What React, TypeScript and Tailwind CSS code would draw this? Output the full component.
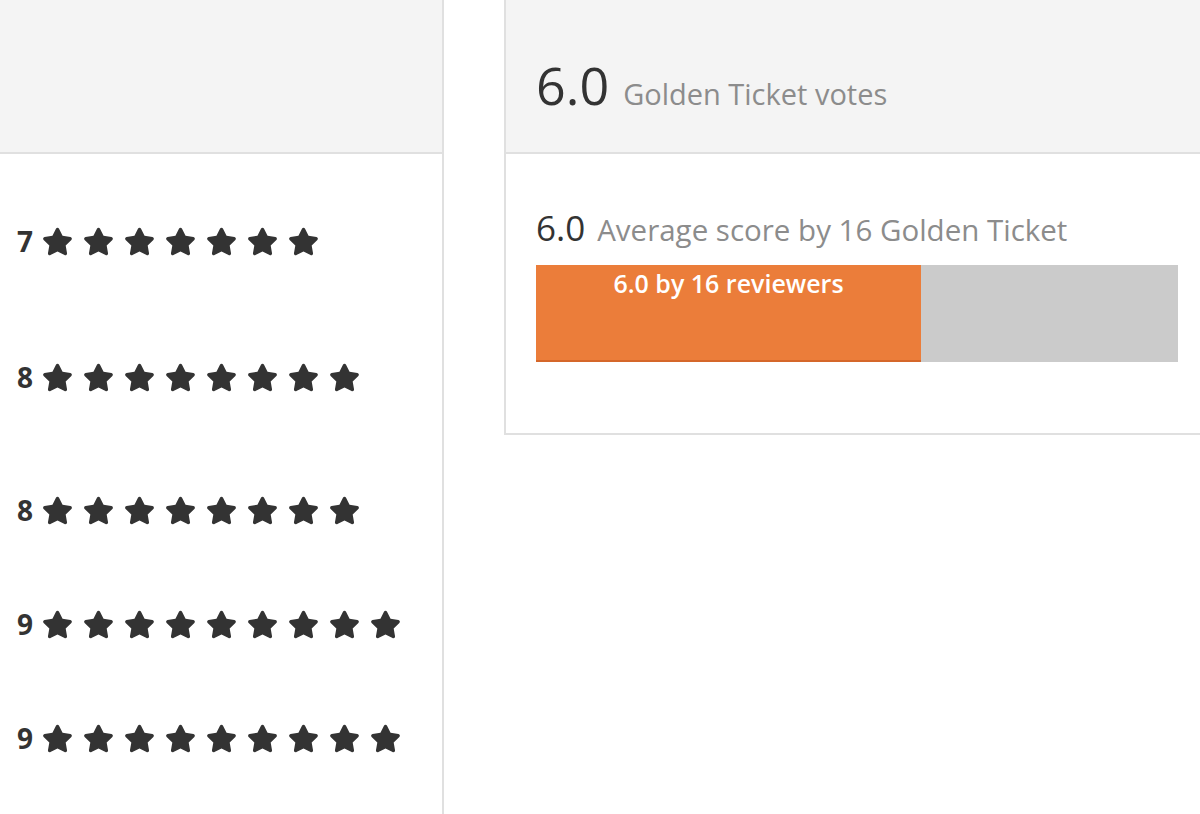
import { FaStar } from "react-icons/fa";

const rows = [
  { score: 7, gap: "mt-[72px]" },
  { score: 8, gap: "mt-[106px]" },
  { score: 8, gap: "mt-[103px]" },
  { score: 9, gap: "mt-[84px]" },
  { score: 9, gap: "mt-[84px]" },
];

const font = { fontFamily: '"Open Sans", "Noto Sans", sans-serif' };

export default function App() {
  return (
    <div className="flex h-[814px] w-[1200px] overflow-hidden bg-white" style={font}>
      {/* Reviewer list */}
      <div className="w-[444px] shrink-0 border-r-2 border-[#e0e0e0]">
        <div className="h-[154px] border-b-2 border-[#e0e0e0] bg-[#f4f4f4]" />
        <div className="flex flex-col">
          {rows.map((row, i) => (
            <div key={i} className={`flex h-[30px] items-center pl-[17px] ${row.gap}`}>
              <span className="mr-[9px] text-[28px] font-bold leading-none text-[#333]">
                {row.score}
              </span>
              <div className="flex gap-[10px] text-[#333]">
                {Array.from({ length: row.score }).map((_, j) => (
                  <FaStar key={j} className="h-[31px] w-[31px]" />
                ))}
              </div>
            </div>
          ))}
        </div>
      </div>

      {/* Golden Ticket card */}
      <div className="ml-[60px] h-[435px] w-[740px] shrink-0 border-b-2 border-l-2 border-[#e0e0e0]">
        <div className="flex h-[154px] items-end border-b-2 border-[#e0e0e0] bg-[#f4f4f4] pb-[41px] pl-[30px]">
          <span className="text-[52px] leading-none text-[#333]">6.0</span>
          <span className="ml-[14px] mb-[3px] text-[29px] leading-none text-[#8c8c8c]">
            Golden Ticket votes
          </span>
        </div>
        <div className="pl-[30px] pt-[56px]">
          <div className="flex items-end">
            <span className="text-[35px] leading-none text-[#333]">6.0</span>
            <span className="ml-[12px] mb-[1px] text-[29.5px] leading-none text-[#8c8c8c]">
              Average score by 16 Golden Ticket
            </span>
          </div>
          <div className="mt-[20px] flex h-[97px] w-[642px] bg-[#cbcbcb]">
            <div className="flex h-full w-[385px] justify-center border-b-2 border-[#d5672a] bg-[#eb7d3a] pt-[2px]">
              <span className="text-[25px] font-semibold leading-[32px] text-white">
                6.0 by 16 reviewers
              </span>
            </div>
          </div>
        </div>
      </div>
    </div>
  );
}
